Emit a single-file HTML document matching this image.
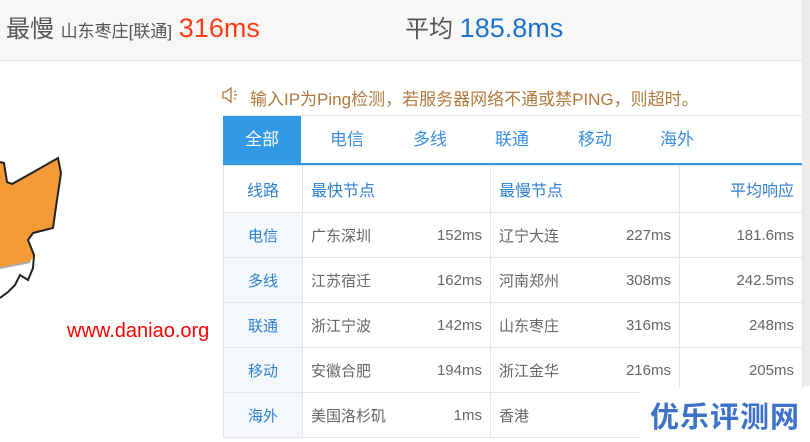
<!DOCTYPE html>
<html><head><meta charset="utf-8"><style>
*{margin:0;padding:0;box-sizing:border-box}
body{width:810px;height:442px;overflow:hidden;background:#fff;font-family:"Liberation Sans","Noto Sans CJK SC",sans-serif;position:relative}
.top{position:absolute;left:0;top:0;width:802px;height:61px;background:#f7f7f7;border-bottom:1px solid #e5e5e5}
.sb{position:absolute;left:802px;top:0;width:8px;height:386px;background:#ececec}
.t{position:absolute;white-space:nowrap}
.tabs{position:absolute;left:223px;top:115px;width:579px;height:50px;border-top:1px solid #e5e5e5;border-bottom:2px solid #3399e6}
.tab{position:absolute;top:0;height:48px;line-height:48px;font-size:17px;color:#3a8ee0;text-align:center;width:78px}
table{position:absolute;left:223px;top:165px;border-collapse:collapse;font-size:15px;color:#666;table-layout:fixed}
td{border:1px solid #e5e5e5;height:45px;padding:0 8px;vertical-align:middle}
td.l{background:#f4f8fc;color:#2f7fcf;text-align:center}
.hd td{height:47px;color:#2f7fcf;font-size:16px}
.r{text-align:right}
.f{display:flex;justify-content:space-between;align-items:center}
</style></head><body>
<div class="top"></div>
<div class="sb"></div>
<div class="t" style="left:6px;top:12px;font-size:24px;color:#555;line-height:32px">最慢 <span style="font-size:17px">山东枣庄[联通]</span> <span style="color:#ff3d14;font-size:27px">316ms</span></div>
<div class="t" style="left:405px;top:12px;font-size:24px;color:#555;line-height:32px">平均 <span style="color:#1e73c8;font-size:27px">185.8ms</span></div>
<svg style="position:absolute;left:222px;top:86px" width="16" height="18" viewBox="0 0 16 18"><path d="M1,6 H4 L9,2 V16 L4,12 H1 Z" fill="none" stroke="#b07a3e" stroke-width="1.3"/><path d="M12,6 L14,5 M12,9 H15 M12,12 L14,13" stroke="#b07a3e" stroke-width="1.2"/></svg>
<div class="t" style="left:250px;top:85px;font-size:17px;color:#b07a3e">输入IP为Ping检测，若服务器网络不通或禁PING，则超时。</div>
<svg style="position:absolute;left:0;top:150px" width="70" height="160">
<path d="M0,12 L4,13 L7,32 L12,34 L30,24 L58,8 L61,23 L57,50 L53,78 L33,83 L28,90 L34,105 L30,112 L0,118 Z" fill="#f49a36"/>
<path d="M0,12 L4,13 L7,32 L12,34 L30,24 L58,8 L61,23 L57,50 L53,78 L33,83 L28,90 L34,105 L33,118 L28,130 L20,125 L15,135 L8,142 L0,148" fill="none" stroke="#222" stroke-width="2"/>
<path d="M0,118 L30,112" stroke="#aaa" stroke-width="2"/>
</svg>
<div class="t" style="left:67px;top:320px;font-size:20px;color:#f00">www.daniao.org</div>
<div class="tabs">
<div class="tab" style="left:0;background:#3399e6;color:#fff">全部</div>
<div class="tab" style="left:85px">电信</div>
<div class="tab" style="left:168px">多线</div>
<div class="tab" style="left:250px">联通</div>
<div class="tab" style="left:333px">移动</div>
<div class="tab" style="left:415px">海外</div>
</div>
<table>
<colgroup><col style="width:79px"><col style="width:188px"><col style="width:189px"><col style="width:123px"></colgroup>
<tr class="hd"><td class="l" style="background:#fff">线路</td><td>最快节点</td><td>最慢节点</td><td class="r">平均响应</td></tr>
<tr><td class="l">电信</td><td><div class="f"><span>广东深圳</span><span>152ms</span></div></td><td><div class="f"><span>辽宁大连</span><span>227ms</span></div></td><td class="r">181.6ms</td></tr>
<tr><td class="l">多线</td><td><div class="f"><span>江苏宿迁</span><span>162ms</span></div></td><td><div class="f"><span>河南郑州</span><span>308ms</span></div></td><td class="r">242.5ms</td></tr>
<tr><td class="l">联通</td><td><div class="f"><span>浙江宁波</span><span>142ms</span></div></td><td><div class="f"><span>山东枣庄</span><span>316ms</span></div></td><td class="r">248ms</td></tr>
<tr><td class="l">移动</td><td><div class="f"><span>安徽合肥</span><span>194ms</span></div></td><td><div class="f"><span>浙江金华</span><span>216ms</span></div></td><td class="r">205ms</td></tr>
<tr><td class="l">海外</td><td><div class="f"><span>美国洛杉矶</span><span>1ms</span></div></td><td><div class="f"><span>香港</span><span>25</span></div></td><td class="r"></td></tr>
</table>
<div style="position:absolute;left:640px;top:388px;width:170px;height:54px;background:#fff"></div>
<div class="t" style="left:650px;top:394px;font-size:29px;font-weight:bold;color:#3d72c9;letter-spacing:1px">优乐评测网</div>
</body></html>
